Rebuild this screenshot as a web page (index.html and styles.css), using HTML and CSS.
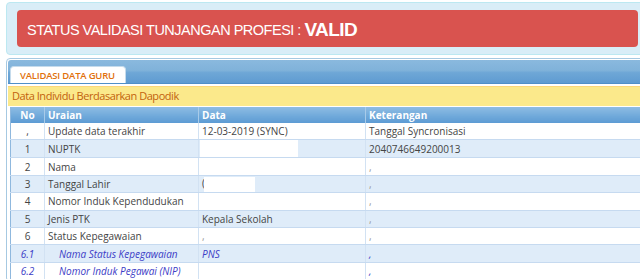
FILE: index.html
```html
<!DOCTYPE html>
<html lang="id">
<head>
  <meta charset="UTF-8" />
  <title>Validasi Tunjangan Profesi</title>
  <link rel="stylesheet" href="styles.css">
</head>
<body>
  <div class="page">
    <div class="status-panel">
      <div class="status-alert">
        STATUS VALIDASI TUNJANGAN PROFESI :&nbsp;<b>VALID</b>
      </div>
    </div>

    <div class="tabs">
      <div class="tab-nav">
        <span class="tab active">VALIDASI DATA GURU</span>
      </div>
      <div class="section-title">Data Individu Berdasarkan Dapodik</div>
      <table class="data-table">
        <thead>
          <tr>
            <th class="col-no">No</th>
            <th class="col-uraian">Uraian</th>
            <th class="col-data">Data</th>
            <th>Keterangan</th>
          </tr>
        </thead>
        <tbody>
          <tr>
            <td class="col-no">,</td>
            <td>Update data terakhir</td>
            <td>12-03-2019 (SYNC)</td>
            <td>Tanggal Syncronisasi</td>
          </tr>
          <tr class="odd">
            <td class="col-no">1</td>
            <td>NUPTK</td>
            <td><span class="redact wide"></span></td>
            <td>2040746649200013</td>
          </tr>
          <tr>
            <td class="col-no">2</td>
            <td>Nama</td>
            <td></td>
            <td class="dim">,</td>
          </tr>
          <tr class="odd">
            <td class="col-no">3</td>
            <td>Tanggal Lahir</td>
            <td>(<span class="redact short"></span></td>
            <td class="dim">,</td>
          </tr>
          <tr>
            <td class="col-no">4</td>
            <td>Nomor Induk Kependudukan</td>
            <td></td>
            <td class="dim">,</td>
          </tr>
          <tr class="odd">
            <td class="col-no">5</td>
            <td>Jenis PTK</td>
            <td>Kepala Sekolah</td>
            <td class="dim">,</td>
          </tr>
          <tr>
            <td class="col-no">6</td>
            <td>Status Kepegawaian</td>
            <td class="dim">,</td>
            <td class="dim">,</td>
          </tr>
          <tr class="odd sub">
            <td class="col-no">6.1</td>
            <td class="indent">Nama Status Kepegawaian</td>
            <td>PNS</td>
            <td class="dim">,</td>
          </tr>
          <tr class="sub">
            <td class="col-no">6.2</td>
            <td class="indent">Nomor Induk Pegawai (NIP)</td>
            <td></td>
            <td class="dim">,</td>
          </tr>
        </tbody>
      </table>
    </div>
  </div>
</body>
</html>
```

FILE: styles.css
```css
/* Validasi page */
body {
  margin: 0;
  font-family: 'Open Sans', 'DejaVu Sans', sans-serif;
  background: #fff;
  overflow: hidden;
}

.page {
  width: 700px;
  padding: 2px 0 0 6px;
}

/* Status box */
.status-panel {
  background: #d9edf7;
  border: 1px solid #bce8f1;
  border-radius: 4px 0 0 4px;
  padding: 7px 0 7px 10px;
}

.status-alert {
  background: #d9534f;
  border-radius: 4px;
  width: 621px;
  height: 37px;
  display: flex;
  align-items: center;
  padding: 2px 0 0 10px;
  box-sizing: border-box;
  font-family: 'Liberation Sans', Arial, sans-serif;
  font-size: 14.5px;
  letter-spacing: -0.5px;
  color: #fff;
  white-space: nowrap;
}

.status-alert b {
  font-size: 19px;
  font-weight: 700;
  letter-spacing: -0.6px;
}

/* Tabs */
.tabs {
  margin-top: 3px;
  border: 1px solid #a6c9e2;
  border-radius: 4px 0 0 4px;
  padding: 1px;
}

.tab-nav {
  height: 24px;
  padding: 9px 0 0 2px;
  box-sizing: border-box;
  background: linear-gradient(#8ab9de, #80b2da 45%, #6ea7d6 55%, #5f9bd1);
  border-radius: 3px 0 0 0;
  border-bottom: 1px solid #4f8fc9;
  display: flex;
  align-items: flex-end;
}

.tab {
  background: #fff;
  border: 1px solid #c5dbec;
  border-bottom: none;
  border-radius: 4px 4px 0 0;
  padding: 2px 10px 0 9px;
  height: 14px;
  font-size: 9.5px;
  letter-spacing: -0.2px;
  font-weight: 600;
  color: #e1700c;
  line-height: 13px;
}

.section-title {
  margin-top: 2px;
  height: 19px;
  background: #fbe98b;
  border-top: 1px solid #fcd77a;
  color: #c2620e;
  font-size: 11px;
  letter-spacing: -0.45px;
  padding-left: 4px;
  line-height: 18px;
}

/* Table */
.data-table {
  margin: 1px 0 0 2px;
  border-collapse: collapse;
  width: 700px;
  font-size: 10px;
  color: #444;
  border-left: 1px solid #8fb8de;
}

.data-table th {
  background: linear-gradient(#8ebce3, #6ea8da 60%, #5d9bd3);
  color: #fff;
  font-weight: 700;
  text-align: left;
  height: 16px;
  padding: 0 3px;
  border-left: 1px solid #a8cbe9;
}

.data-table th.col-no {
  text-align: center;
  border-left: none;
}

.data-table td {
  height: 16.4px;
  padding: 0 3px;
  border-bottom: 1px solid #c6daf0;
  border-left: 1px solid #d2e2f3;
  white-space: nowrap;
}

.data-table .col-no {
  width: 27px;
  text-align: center;
  border-left: none;
}

.data-table .col-uraian {
  width: 147px;
}

.data-table .col-data {
  width: 160px;
}

.data-table tr.odd td {
  background: #dfecf9;
}

.data-table tr.sub td {
  color: #3b3bc6;
  font-style: italic;
}

.data-table td.indent {
  padding-left: 14px;
}

.data-table td.dim {
  color: #999;
}

.redact {
  display: inline-block;
  background: #fff;
  vertical-align: middle;
}

.redact.wide {
  width: 98px;
  height: 17px;
  margin-left: -2px;
}

.redact.short {
  width: 51px;
  height: 15px;
  margin-left: -1px;
}
```
